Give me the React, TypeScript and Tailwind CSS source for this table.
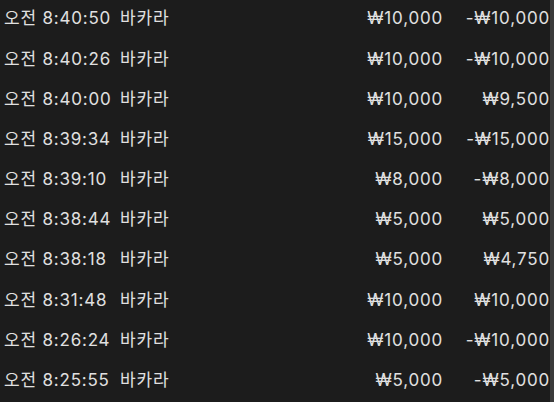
const ROWS = [
  { time: '오전 8:40:50', game: '바카라', bet: '₩10,000', result: '-₩10,000' },
  { time: '오전 8:40:26', game: '바카라', bet: '₩10,000', result: '-₩10,000' },
  { time: '오전 8:40:00', game: '바카라', bet: '₩10,000', result: '₩9,500' },
  { time: '오전 8:39:34', game: '바카라', bet: '₩15,000', result: '-₩15,000' },
  { time: '오전 8:39:10', game: '바카라', bet: '₩8,000', result: '-₩8,000' },
  { time: '오전 8:38:44', game: '바카라', bet: '₩5,000', result: '₩5,000' },
  { time: '오전 8:38:18', game: '바카라', bet: '₩5,000', result: '₩4,750' },
  { time: '오전 8:31:48', game: '바카라', bet: '₩10,000', result: '₩10,000' },
  { time: '오전 8:26:24', game: '바카라', bet: '₩10,000', result: '-₩10,000' },
  { time: '오전 8:25:55', game: '바카라', bet: '₩5,000', result: '-₩5,000' },
]

export default function App() {
  return (
    <div className="flex h-[402px] w-[554px] overflow-hidden bg-[#1c1c1c] text-[17px] tracking-[0.8px] text-[#e0e0e0] font-['Inter','Noto_Sans_CJK_KR',sans-serif]">
      <div className="flex-1 -mt-[1px]">
        {ROWS.map((r, i) => (
          <div key={i} className="flex h-[40.2px] items-center pl-[4px]">
            <span className="w-[116px] whitespace-nowrap">{r.time}</span>
            <span className="whitespace-nowrap">{r.game}</span>
            <span className="flex-1" />
            <span className="w-[100px] text-right">{r.bet}</span>
            <span className="w-[107px] text-right">{r.result}</span>
          </div>
        ))}
      </div>
      <div className="w-[4px] bg-[#3a3a3a]" />
    </div>
  )
}
